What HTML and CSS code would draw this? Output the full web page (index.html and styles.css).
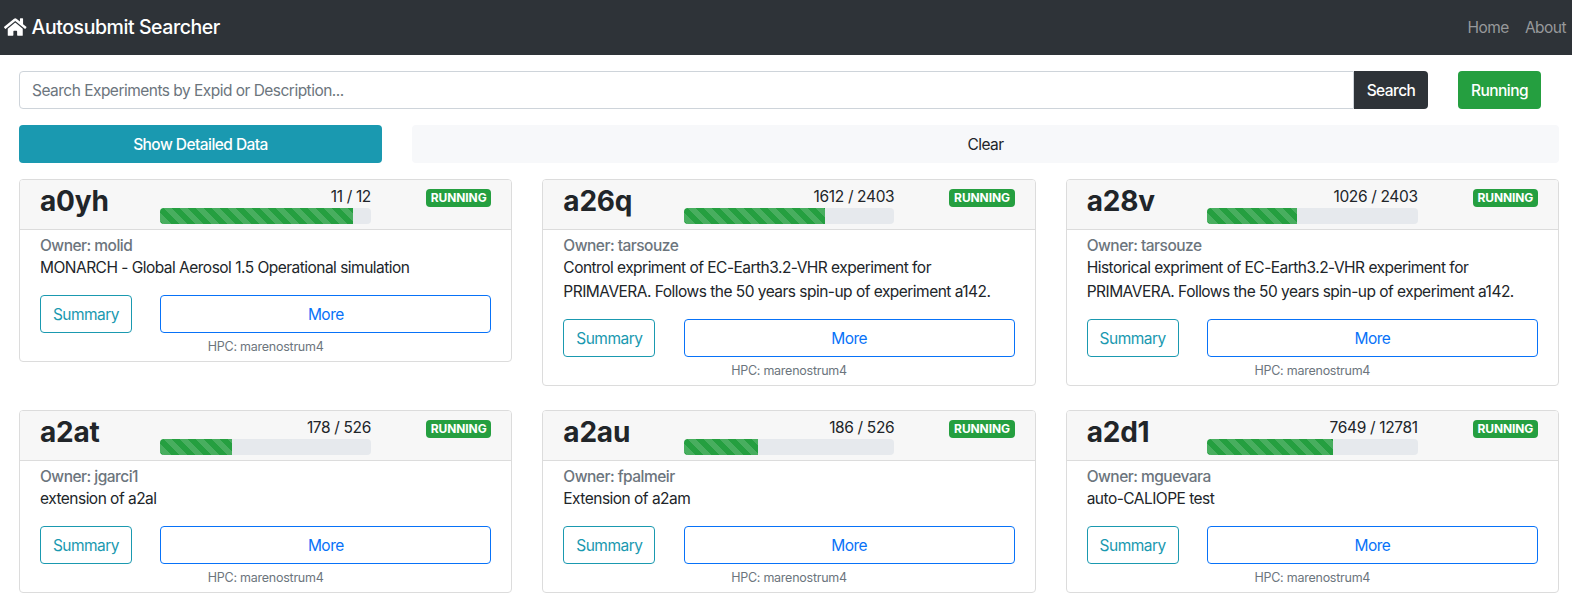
FILE: index.html
```html
<!DOCTYPE html>
<html lang="en">
<head>
<meta charset="utf-8">
<title>Autosubmit Searcher</title>
<link rel="stylesheet" href="styles.css">
</head>
<body>
<nav class="navbar">
  <h1 class="brand"><svg class="home" viewBox="0 0 576 512"><path fill="currentColor" d="M280.37 148.26L96 300.11V464a16 16 0 0 0 16 16l112.060-.29a16 16 0 0 0 15.920-16V368a16 16 0 0 1 16-16h64a16 16 0 0 1 16 16v95.640a16 16 0 0 0 16 16.050L464 480a16 16 0 0 0 16-16V300L295.670 148.260a12.190 12.190 0 0 0-15.300 0zM571.600 251.470L488 182.560V44.050a12 12 0 0 0-12-12h-56a12 12 0 0 0-12 12v72.610L318.470 43a48 48 0 0 0-61 0L4.340 251.470a12 12 0 0 0-1.600 16.900l25.500 31A12 12 0 0 0 45.150 301l235.220-193.740a12.190 12.190 0 0 1 15.300 0L530.900 301a12 12 0 0 0 16.900-1.600l25.500-31a12 12 0 0 0-1.700-16.930z"/></svg><span class="title">Autosubmit Searcher</span></h1>
  <div class="links"><a>Home</a><a>About</a></div>
</nav>
<main class="main">
  <div class="search-row">
    <div class="group"><div class="input">Search Experiments by Expid or Description...</div><button class="btn dark">Search</button></div>
    <button class="btn green">Running</button>
  </div>
  <div class="action-row"><button class="btn info">Show Detailed Data</button><button class="btn light">Clear</button></div>
  <div class="cards" id="cards"></div>
</main>
<script src="app.js"></script>
</body>
</html>
```
FILE: styles.css
```css
* { box-sizing: border-box; }
body { margin: 0; font: 400 15.5px/24px Inter, "Liberation Sans", sans-serif; letter-spacing: -0.52px; color: #212529; background: #fff; }
.navbar { height: 55px; background: #2e3338; display: flex; align-items: center; justify-content: space-between; padding: 0 6px 1px 4px; }
.brand { margin: 0; display: flex; align-items: center; gap: 5px; color: #fff; font-size: 19.5px; font-weight: 500; letter-spacing: -0.43px; }
.home { width: 22.5px; height: 20px; }
.links { display: flex; gap: 16px; padding-top: 2px; color: #97999b; }
.main { padding: 16px 13px 0 19px; }
.btn { height: 38px; padding: 2px 11px 0; border: 1px solid transparent; border-radius: 4px; font: inherit; letter-spacing: inherit; text-align: center; color: #fff; white-space: nowrap; }
.search-row { display: flex; gap: 30px; padding-right: 18px; }
.group { display: flex; width: 1409px; }
.input { flex: 1; height: 38px; border: 1px solid #ced4da; border-radius: 4px 0 0 4px; padding: 7px 12px 5px; color: #6c757d; }
.dark, .green, .info { font-weight: 500; letter-spacing: -0.55px; }
.dark { background: #2e3338; width: 74px; border-radius: 0 4px 4px 0; }
.green { background: #259f40; width: 83px; }
.action-row { display: grid; grid-template-columns: 363px 1fr; gap: 30px; margin: 16px 0; }
.info { background: #1a99b0; }
.light { background: #f7f8fa; color: #212529; }
.cards { display: grid; grid-template-columns: repeat(3, 1fr); gap: 24px 30px; align-items: start; }
.card { border: 1px solid #dcdcdc; border-radius: 4px; overflow: hidden; }
.head { height: 50px; background: #f7f7f7; border-bottom: 1px solid #dcdcdc; padding: 4px 20px 0; display: grid; grid-template-columns: 120.3px 210.7px 1fr; }
.name { margin: 0; font-size: 28px; line-height: 34px; font-weight: 700; letter-spacing: -0.2px; }
.count { padding-top: 1px; line-height: 23px; height: 24px; line-height: 24px; text-align: right; letter-spacing: -0.35px; }
.bar { height: 16px; background: #e6e9ed; border-radius: 4px; overflow: hidden; }
.fill { height: 16px; background: linear-gradient(45deg, #48ae5f 25%, #259f40 25%, #259f40 50%, #48ae5f 50%, #48ae5f 75%, #259f40 75%) 3px 0 / 16px 16px; }
.badge { justify-self: end; margin-top: 5px; width: 65.3px; height: 18px; text-align: center; border-radius: 4px; background: #259f40; color: #fff; font-size: 12px; line-height: 18px; font-weight: 700; letter-spacing: -0.1px; }
.content { padding: 5px 20px 2px; }
.owner { color: #6c757d; font-weight: 500; line-height: 22px; }
.desc { margin-top: -1px; }
.actions { display: grid; grid-template-columns: 92px 1fr; gap: 28.3px; margin-top: 15px; }
.summary { color: #1a99b0; border-color: #1a99b0; background: #fff; }
.more { color: #0872f8; border-color: #0872f8; background: #fff; }
.hpc { margin-top: 2px; text-align: center; font-size: 12.5px; color: #6c757d; letter-spacing: -0.25px; }
```
FILE: app.js
```js
const experiments = [
  ["a0yh", 11, 12, "molid", "MONARCH - Global Aerosol 1.5 Operational simulation"],
  ["a26q", 1612, 2403, "tarsouze", "Control expriment of EC-Earth3.2-VHR experiment for<br>PRIMAVERA. Follows the 50 years spin-up of experiment a142."],
  ["a28v", 1026, 2403, "tarsouze", "Historical expriment of EC-Earth3.2-VHR experiment for<br>PRIMAVERA. Follows the 50 years spin-up of experiment a142."],
  ["a2at", 178, 526, "jgarci1", "extension of a2al"],
  ["a2au", 186, 526, "fpalmeir", "Extension of a2am"],
  ["a2d1", 7649, 12781, "mguevara", "auto-CALIOPE test"]
];
document.getElementById("cards").innerHTML = experiments.map(([id, done, total, owner, text]) => `
<article class="card">
  <div class="head"><h2 class="name"><span>${id}</span></h2>
    <div><div class="count"><span>${done} / ${total}</span></div><div class="bar"><div class="fill" style="width:${done / total * 100}%"></div></div></div>
    <span class="badge">RUNNING</span></div>
  <div class="content"><div class="owner"><span>Owner: ${owner}</span></div><div class="desc"><span>${text}</span></div>
    <div class="actions"><button class="btn summary">Summary</button><button class="btn more">More</button></div>
    <div class="hpc"><span>HPC: marenostrum4</span></div></div>
</article>`).join("");
```
